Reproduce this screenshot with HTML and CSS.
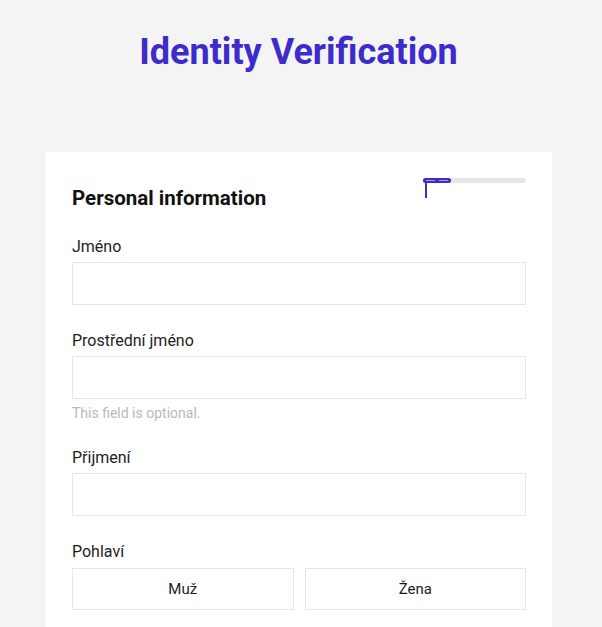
FILE: index.html
```html
<!DOCTYPE html>
<html lang="cs">
<head>
<meta charset="utf-8">
<title>Identity Verification</title>
<link rel="stylesheet" href="styles.css">
</head>
<body>
<div class="page">
  <h1 class="title">Identity Verification</h1>
  <div class="card">
    <div class="card-head">
      <h2 class="section-title">Personal information</h2>
      <div class="progress">
        <div class="progress-fill"><span class="dash"></span><span class="dash"></span></div>
        <span class="progress-tick"></span>
      </div>
    </div>
    <div class="field">
      <label class="label">Jméno</label>
      <div class="input"></div>
    </div>
    <div class="field">
      <label class="label">Prostřední jméno</label>
      <div class="input"></div>
      <div class="hint">This field is optional.</div>
    </div>
    <div class="field">
      <label class="label">Přijmení</label>
      <div class="input"></div>
    </div>
    <div class="field">
      <label class="label">Pohlaví</label>
      <div class="choices">
        <div class="choice">Muž</div>
        <div class="choice">Žena</div>
      </div>
    </div>
  </div>
</div>
</body>
</html>
```
FILE: styles.css
```css
html, body {
  margin: 0;
  padding: 0;
  background: #f4f4f4;
  font-family: Roboto, "Noto Sans", sans-serif;
  color: #1d1d1d;
}
.page {
  width: 507px;
  margin-left: 45px;
}
.title {
  margin: 31px 0 0;
  font-size: 36px;
  font-weight: 700;
  line-height: normal;
  color: #3d2ccc;
  text-align: center;
}
.card {
  margin-top: 79px;
  background: #fff;
  padding: 26px 26px 40px 27px;
  min-height: 500px;
}
.card-head {
  display: flex;
  justify-content: space-between;
  align-items: flex-start;
}
.section-title {
  margin: 8px 0 0;
  font-size: 20.5px;
  font-weight: 700;
  line-height: normal;
  color: #111;
}
.progress {
  position: relative;
  width: 103px;
  height: 5px;
  border-radius: 3px;
  background: #e6e6e6;
}
.progress-fill {
  width: 28px;
  height: 5px;
  border-radius: 3px;
  background: #3d2ccc;
  display: flex;
  align-items: center;
  justify-content: space-between;
  padding: 0 3px;
  box-sizing: border-box;
}
.dash {
  width: 9px;
  height: 1px;
  background: #a9a3e6;
}
.progress-tick {
  position: absolute;
  left: 2px;
  top: 4px;
  width: 2px;
  height: 16px;
  background: #3d2ccc;
}
.field {
  margin-top: 26px;
}
.card-head + .field {
  margin-top: 27px;
}
.label {
  display: block;
  font-size: 16px;
  line-height: normal;
  color: #1d1d1d;
}
.input {
  margin-top: 6px;
  height: 41px;
  border: 1px solid #e6e6e6;
  background: #fff;
}
.hint {
  margin-top: 6px;
  font-size: 14px;
  line-height: normal;
  color: #b9b9b9;
}
.field:has(.hint) + .field {
  margin-top: 27px;
}
.choices {
  margin-top: 7px;
  display: grid;
  grid-template-columns: 1fr 1fr;
  gap: 11px;
}
.choice {
  height: 40px;
  border: 1px solid #e6e6e6;
  display: flex;
  align-items: center;
  justify-content: center;
  font-size: 15px;
  color: #1d1d1d;
}
```
